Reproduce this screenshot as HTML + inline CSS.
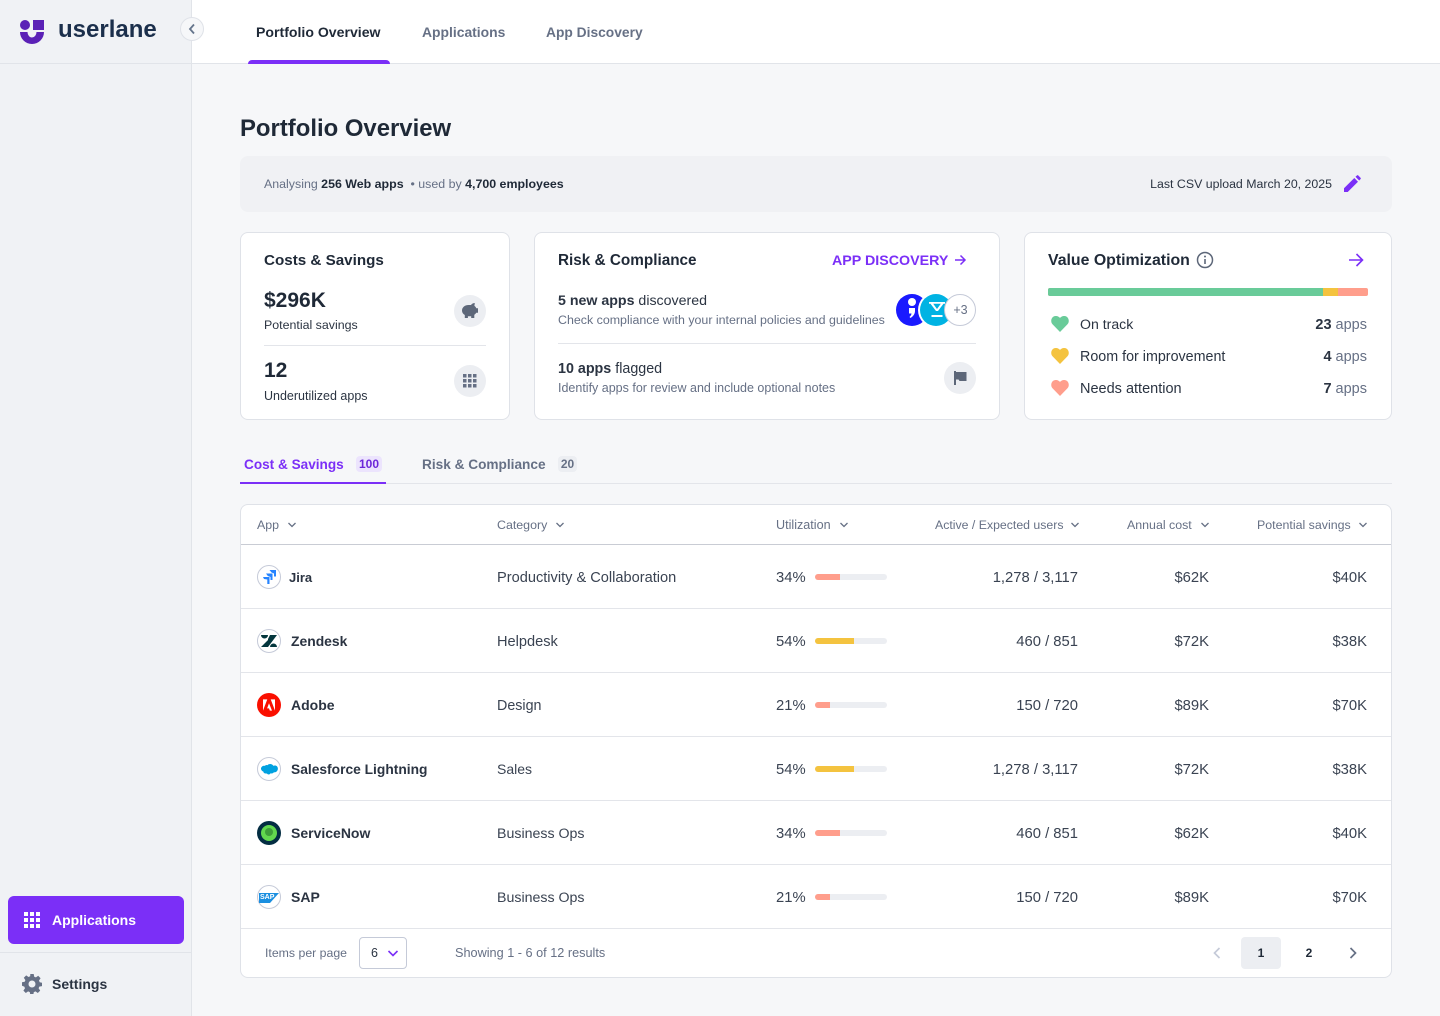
<!DOCTYPE html>
<html lang="en"><head><meta charset="utf-8"><title>Portfolio Overview</title>
<style>
html,body{margin:0;padding:0}
body{width:1440px;height:1016px;position:relative;overflow:hidden;background:#f6f7f9;font-family:"Liberation Sans",sans-serif;color:#1f2937}
div,span,svg{position:absolute}
b,i{position:static;font-style:normal}
.t{white-space:nowrap;line-height:20px;height:20px}
.r{text-align:right}
.g{color:#667085}.d{color:#2b3442}
b{font-weight:700}
.card{background:#fff;border:1px solid #dfe2e8;border-radius:8px;box-sizing:border-box}
.hr{height:1px;background:#e3e5ea}
.h{font-weight:700;color:#1f2937}
.circ{width:32px;height:32px;border-radius:50%;background:#eceef2}
.logo{width:24px;height:24px;border-radius:50%;box-sizing:border-box;border:1px solid #c5cad8;background:#fff;left:257px}
.bar{left:815px;width:72px;height:6px;border-radius:3px;background:#eceef2;overflow:hidden}
.bar span{left:0;top:0;height:6px}
.th{font-size:12.400px;color:#667085;top:515px}
.nm{font-size:14px;font-weight:700;color:#2b3442}
.v{font-size:14.600px;color:#3a4352;margin-top:1px}
.n{font-size:14.800px;color:#3a4352;margin-top:1px}
</style></head><body>

<!-- sidebar -->
<div style="left:0;top:0;width:192px;height:1016px;background:#f0f2f5;border-right:1px solid #e1e4e9;box-sizing:border-box"></div>
<div style="left:0;top:63px;width:1440px;height:1px;background:#e1e4e9"></div>
<div style="left:192px;top:0;width:1248px;height:63px;background:#fff"></div>

<svg style="left:20px;top:20px" width="24" height="24" viewBox="0 0 24 24"><circle cx="5" cy="5" r="5" fill="#5b21b6"/><rect x="13" y="0" width="11" height="10" fill="#5b21b6"/><path d="M0 12h7.500a4.500 5.500 0 0 0 9 0H24a12 12 0 0 1-24 0z" fill="#5b21b6"/></svg>
<span class="t" style="left:58px;top:18px;font-size:24px;line-height:24px;height:24px;font-weight:700;color:#1b2f4b">userlane</span>
<div style="left:180px;top:17px;width:24px;height:24px;border-radius:50%;background:#f6f7f9;border:1px solid #dfe2e8;box-sizing:border-box"></div>
<svg style="left:187px;top:23px" width="10" height="12" viewBox="0 0 10 12"><path d="M7 1.500 3 6l4 4.500" fill="none" stroke="#64748b" stroke-width="1.800"/></svg>

<!-- top nav -->
<span class="t" style="left:256px;top:22px;font-size:14.100px;font-weight:700;color:#1f2937">Portfolio Overview</span>
<span class="t g" style="left:422px;top:22px;font-size:13.900px;font-weight:700">Applications</span>
<span class="t g" style="left:546px;top:23px;font-size:13.800px;font-weight:700">App Discovery</span>
<div style="left:248px;top:60px;width:142px;height:4px;background:#7b2ff7;border-radius:4px 4px 0 0"></div>

<span class="t" style="left:240px;top:114px;height:30px;line-height:30px;font-size:23.900px;font-weight:700;color:#1f2937">Portfolio Overview</span>

<!-- banner -->
<div style="left:240px;top:156px;width:1152px;height:56px;background:#f0f1f4;border-radius:8px"></div>
<span class="t g" style="left:264px;top:174px;font-size:12.400px">Analysing <b style="color:#1f2937">256 Web apps</b> &nbsp;• used by <b style="color:#1f2937">4,700 employees</b></span>
<span class="t r d" style="right:108px;top:174px;font-size:12.350px">Last CSV upload March 20, 2025</span>
<svg style="left:1343px;top:175px" width="18" height="18" viewBox="0 0 18 18"><path d="M1 17v-3.700L11.300 3l3.700 3.700L4.700 17zM12.500 1.800l1.400-1.300a1 1 0 0 1 1.400 0l2.200 2.200a1 1 0 0 1 0 1.400l-1.300 1.400z" fill="#7b2ff7"/></svg>

<!-- card 1 -->
<div class="card" style="left:240px;top:232px;width:270px;height:188px"></div>
<span class="t h" style="left:264px;top:251px;font-size:15.200px">Costs &amp; Savings</span>
<span class="t" style="left:264px;top:291px;font-size:21px;font-weight:700;color:#1f2937">$296K</span>
<span class="t d" style="left:264px;top:315px;font-size:12.400px">Potential savings</span>
<div class="circ" style="left:454px;top:295px"></div>
<svg style="left:461px;top:302px" width="18" height="17" viewBox="0 0 18 17"><path d="M1 8.500C1 5.300 4 3 7.500 3H10c.9-1.200 2.300-2 3.800-2l-.4 2.900c.9.600 1.500 1.300 1.900 2.300H17v4.600h-1.800c-.4.800-1.100 1.500-1.900 2V16h-3.100v-1.700H6.900V16H3.800v-3C2 12 1 10.400 1 8.500z" fill="#5d6779"/></svg>
<div class="hr" style="left:264px;top:345px;width:222px"></div>
<span class="t" style="left:264px;top:361px;font-size:21px;font-weight:700;color:#1f2937">12</span>
<span class="t d" style="left:264px;top:386px;font-size:12.500px">Underutilized apps</span>
<div class="circ" style="left:454px;top:365px"></div>
<svg style="left:463px;top:374px" width="14" height="14" viewBox="0 0 14 14" fill="#667085"><rect width="3.500" height="3.500"/><rect x="5" width="3.500" height="3.500"/><rect x="10" width="3.500" height="3.500"/><rect y="5" width="3.500" height="3.500"/><rect x="5" y="5" width="3.500" height="3.500"/><rect x="10" y="5" width="3.500" height="3.500"/><rect y="10" width="3.500" height="3.500"/><rect x="5" y="10" width="3.500" height="3.500"/><rect x="10" y="10" width="3.500" height="3.500"/></svg>

<!-- card 2 -->
<div class="card" style="left:534px;top:232px;width:466px;height:188px"></div>
<span class="t h" style="left:558px;top:251px;font-size:15.300px">Risk &amp; Compliance</span>
<span class="t" style="left:832px;top:251px;font-size:14.250px;font-weight:700;color:#7b2ff7">APP DISCOVERY</span>
<svg style="left:953px;top:253px" width="14" height="14" viewBox="0 0 14 14"><path d="M2 7h10M7.500 2.500 12 7l-4.500 4.500" fill="none" stroke="#7b2ff7" stroke-width="1.500"/></svg>
<span class="t d" style="left:558px;top:291px;font-size:14.200px"><b>5 new apps</b> discovered</span>
<span class="t g" style="left:558px;top:310px;font-size:12.420px">Check compliance with your internal policies and guidelines</span>
<div style="left:896px;top:294px;width:32px;height:32px;border-radius:50%;background:#1a1aff"></div>
<div style="left:908px;top:298px;width:8px;height:8px;border-radius:50%;background:#fff"></div>
<svg style="left:908px;top:308px" width="7" height="10" viewBox="0 0 7 10"><path d="M1 0h6v3c0 3-2 5.500-4.500 7L1.500 9C3 7.500 3.400 6.500 3.500 5.500H1z" fill="#fff"/></svg>
<div style="left:918px;top:292px;width:36px;height:36px;border-radius:50%;background:#fff"></div>
<div style="left:920px;top:294px;width:32px;height:32px;border-radius:50%;background:#00b3e3"></div>
<svg style="left:929px;top:302px" width="16" height="16" viewBox="0 0 16 16"><path d="M0 0h16v1.800h-1.500L9 9H7L1.500 1.800H0zM4.200 1.800 8 7l3.800-5.200zM2.500 13h11v2h-11z" fill="#fff"/></svg>
<div style="left:944px;top:294px;width:32px;height:32px;border-radius:50%;background:#fff;border:1px solid #c5cad8;box-sizing:border-box"></div>
<span class="t g" style="left:944px;top:300px;width:33px;text-align:center;font-size:12.500px">+3</span>
<div class="hr" style="left:558px;top:343px;width:418px"></div>
<span class="t d" style="left:558px;top:359px;font-size:14.300px"><b>10 apps</b> flagged</span>
<span class="t g" style="left:558px;top:378px;font-size:12.500px">Identify apps for review and include optional notes</span>
<div class="circ" style="left:944px;top:362px"></div>
<svg style="left:953px;top:371px" width="14" height="14" viewBox="0 0 14 14"><path d="M1 0h2v1h10.500v9H6.500l-1-1.500H3V14H1z" fill="#5d6779"/></svg>

<!-- card 3 -->
<div class="card" style="left:1024px;top:232px;width:368px;height:188px"></div>
<span class="t h" style="left:1048px;top:251px;font-size:15.870px">Value Optimization</span>
<svg style="left:1196px;top:251px" width="18" height="18" viewBox="0 0 18 18"><circle cx="9" cy="9" r="7.500" fill="none" stroke="#5d6779" stroke-width="1.500"/><path d="M9 8v5" stroke="#5d6779" stroke-width="1.600"/><circle cx="9" cy="5.500" r="1" fill="#5d6779"/></svg>
<svg style="left:1347px;top:251px" width="18" height="18" viewBox="0 0 18 18"><path d="M2 9h13M9.500 3l6 6-6 6" fill="none" stroke="#7b2ff7" stroke-width="1.600"/></svg>
<div style="left:1048px;top:288px;width:320px;height:8px;border-radius:2px;overflow:hidden;background:#ff9e8c">
 <span style="left:0;top:0;width:275px;height:8px;background:#69cb99"></span>
 <span style="left:275px;top:0;width:15px;height:8px;background:#f4c33f"></span>
</div>
<svg style="left:1051px;top:316px" width="18" height="16" viewBox="0 0 18 16"><path d="M9 16 1.500 8.300C-1 5.500.3.300 4.500 0 6.300-.1 7.900.6 9 2c1.100-1.400 2.700-2.100 4.500-2 4.200.3 5.500 5.500 3 8.300z" fill="#69cb99"/></svg>
<span class="t d" style="left:1080px;top:314px;font-size:14.100px">On track</span>
<span class="t r g" style="right:73px;top:315px;font-size:14.500px"><b style="color:#2b3442">23</b> apps</span>
<svg style="left:1051px;top:348px" width="18" height="16" viewBox="0 0 18 16"><path d="M9 16 1.500 8.300C-1 5.500.3.300 4.500 0 6.300-.1 7.900.6 9 2c1.100-1.400 2.700-2.100 4.500-2 4.200.3 5.500 5.500 3 8.300z" fill="#f4c33f"/></svg>
<span class="t d" style="left:1080px;top:347px;font-size:14.300px">Room for improvement</span>
<span class="t r g" style="right:73px;top:347px;font-size:14.500px"><b style="color:#2b3442">4</b> apps</span>
<svg style="left:1051px;top:380px" width="18" height="16" viewBox="0 0 18 16"><path d="M9 16 1.500 8.300C-1 5.500.3.300 4.500 0 6.300-.1 7.900.6 9 2c1.100-1.400 2.700-2.100 4.500-2 4.200.3 5.500 5.500 3 8.300z" fill="#ff9e8c"/></svg>
<span class="t d" style="left:1080px;top:379px;font-size:14.500px">Needs attention</span>
<span class="t r g" style="right:73px;top:379px;font-size:14.500px"><b style="color:#2b3442">7</b> apps</span>

<!-- tabs -->
<div style="left:240px;top:483px;width:1152px;height:1px;background:#e3e5ea"></div>
<div style="left:240px;top:482px;width:146px;height:2px;background:#7b2ff7"></div>
<span class="t" style="left:244px;top:455px;font-size:13.600px;font-weight:700;color:#7b2ff7">Cost &amp; Savings</span>
<div style="left:356px;top:456px;width:26px;height:16px;background:#ece4fd;border-radius:4px"></div>
<span class="t" style="left:356px;top:454px;width:26px;text-align:center;font-size:12px;font-weight:700;color:#6d28d9">100</span>
<span class="t g" style="left:422px;top:455px;font-size:13.650px;font-weight:700">Risk &amp; Compliance</span>
<div style="left:558px;top:456px;width:19px;height:16px;background:#eceef2;border-radius:4px"></div>
<span class="t g" style="left:558px;top:454px;width:19px;text-align:center;font-size:12px;font-weight:700">20</span>

<!-- table -->
<div class="card" style="left:240px;top:504px;width:1152px;height:474px"></div>
<div style="left:241px;top:544px;width:1150px;height:1px;background:#c9ccd4"></div>
<div class="hr" style="left:241px;top:608px;width:1150px"></div>
<div class="hr" style="left:241px;top:672px;width:1150px"></div>
<div class="hr" style="left:241px;top:736px;width:1150px"></div>
<div class="hr" style="left:241px;top:800px;width:1150px"></div>
<div class="hr" style="left:241px;top:864px;width:1150px"></div>
<div class="hr" style="left:241px;top:928px;width:1150px"></div>

<span class="t th" style="left:257px">App</span>
<svg style="left:287px;top:521px" width="10" height="8" viewBox="0 0 10 8"><path d="M1.500 2 5 5.500 8.500 2" fill="none" stroke="#667085" stroke-width="1.300"/></svg>
<span class="t th" style="left:497px">Category</span>
<svg style="left:555px;top:521px" width="10" height="8" viewBox="0 0 10 8"><path d="M1.500 2 5 5.500 8.500 2" fill="none" stroke="#667085" stroke-width="1.300"/></svg>
<span class="t th" style="left:776px;font-size:12.600px">Utilization</span>
<svg style="left:839px;top:521px" width="10" height="8" viewBox="0 0 10 8"><path d="M1.500 2 5 5.500 8.500 2" fill="none" stroke="#667085" stroke-width="1.300"/></svg>
<span class="t th" style="left:935px;font-size:12.300px">Active / Expected users</span>
<svg style="left:1070px;top:521px" width="10" height="8" viewBox="0 0 10 8"><path d="M1.500 2 5 5.500 8.500 2" fill="none" stroke="#667085" stroke-width="1.300"/></svg>
<span class="t th" style="left:1127px">Annual cost</span>
<svg style="left:1200px;top:521px" width="10" height="8" viewBox="0 0 10 8"><path d="M1.500 2 5 5.500 8.500 2" fill="none" stroke="#667085" stroke-width="1.300"/></svg>
<span class="t th" style="left:1257px">Potential savings</span>
<svg style="left:1358px;top:521px" width="10" height="8" viewBox="0 0 10 8"><path d="M1.500 2 5 5.500 8.500 2" fill="none" stroke="#667085" stroke-width="1.300"/></svg>

<!-- row 1 -->
<div class="logo" style="top:565px"></div>
<svg style="left:262px;top:570px" width="14" height="14" viewBox="0 0 14 14"><path d="M7.500 0H14v6.500h-2V3.500L9.500 2.500zM4 3.500h6.500V10h-2V7L5.800 6zM1 7h6.500v7h-2.200V9.500L2 9z" fill="#2684ff"/></svg>
<span class="t nm" style="left:289px;top:568px;font-size:13px">Jira</span>
<span class="t v" style="left:497px;top:567px">Productivity &amp; Collaboration</span>
<span class="t n" style="left:776px;top:567px">34%</span>
<div class="bar" style="top:574px"><span style="width:25px;background:#ff9e8c"></span></div>
<span class="t n r" style="right:362px;top:567px">1,278 / 3,117</span>
<span class="t n r" style="right:231px;top:567px">$62K</span>
<span class="t n r" style="right:73px;top:567px">$40K</span>

<!-- row 2 -->
<div class="logo" style="top:629px"></div>
<svg style="left:261px;top:635px" width="16" height="12" viewBox="0 0 16 12"><path d="M0 0h7a3.500 3.500 0 0 1-7 0zM9 0h7L7 12V4zM7 5v7H0zM9 12a3.500 3.500 0 0 1 7 0z" fill="#03363d"/></svg>
<span class="t nm" style="left:291px;top:631px;font-size:13.900px">Zendesk</span>
<span class="t v" style="left:497px;top:631px">Helpdesk</span>
<span class="t n" style="left:776px;top:631px">54%</span>
<div class="bar" style="top:638px"><span style="width:39px;background:#f4c33f"></span></div>
<span class="t n r" style="right:362px;top:631px">460 / 851</span>
<span class="t n r" style="right:231px;top:631px">$72K</span>
<span class="t n r" style="right:73px;top:631px">$38K</span>

<!-- row 3 -->
<div class="logo" style="top:693px;background:#fa0f00;border:0"></div>
<svg style="left:263px;top:699px" width="12" height="12" viewBox="0 0 14 13"><path d="M0 0h5L0 13zM9 0h5v13zM7 4.500 10.500 13H8L7 10.500H4.800z" fill="#fff"/></svg>
<span class="t nm" style="left:291px;top:695px">Adobe</span>
<span class="t v" style="left:497px;top:695px;font-size:14.300px">Design</span>
<span class="t n" style="left:776px;top:695px">21%</span>
<div class="bar" style="top:702px"><span style="width:15px;background:#ff9e8c"></span></div>
<span class="t n r" style="right:362px;top:695px">150 / 720</span>
<span class="t n r" style="right:231px;top:695px">$89K</span>
<span class="t n r" style="right:73px;top:695px">$70K</span>

<!-- row 4 -->
<div class="logo" style="top:757px"></div>
<svg style="left:260px;top:763px" width="18" height="13" viewBox="0 0 18 13"><path d="M7.500 2.200C8.200 1.400 9.200 1 10.200 1c1.300 0 2.500.7 3.100 1.800 3-1.100 5 1 4.500 3.600-.3 1.800-2 3.200-3.900 2.900-.7 1.100-2.200 1.500-3.300 1-.6 1.400-2.800 1.600-3.700.2C5 10.800 3.400 10 3.400 8.600 1.500 8 .5 6.200 1.200 4.600c.7-1.500 2.400-2.200 3.600-1.700.6-.7 1.700-1.300 2.700-.7z" fill="#00a1e0"/></svg>
<span class="t nm" style="left:291px;top:760px;font-size:13.800px">Salesforce Lightning</span>
<span class="t v" style="left:497px;top:759px;font-size:14px;margin-top:0">Sales</span>
<span class="t n" style="left:776px;top:759px">54%</span>
<div class="bar" style="top:766px"><span style="width:39px;background:#f4c33f"></span></div>
<span class="t n r" style="right:362px;top:759px">1,278 / 3,117</span>
<span class="t n r" style="right:231px;top:759px">$72K</span>
<span class="t n r" style="right:73px;top:759px">$38K</span>

<!-- row 5 -->
<div class="logo" style="top:821px;background:#032d42;border:0"></div>
<div style="left:261px;top:825px;width:16px;height:16px;border-radius:50%;background:#62d84e"></div>
<div style="left:265px;top:828px;width:8px;height:8px;border-radius:50%;background:#3f9e3a"></div>
<span class="t nm" style="left:291px;top:823px">ServiceNow</span>
<span class="t v" style="left:497px;top:823px;font-size:14.200px">Business Ops</span>
<span class="t n" style="left:776px;top:823px">34%</span>
<div class="bar" style="top:830px"><span style="width:25px;background:#ff9e8c"></span></div>
<span class="t n r" style="right:362px;top:823px">460 / 851</span>
<span class="t n r" style="right:231px;top:823px">$62K</span>
<span class="t n r" style="right:73px;top:823px">$40K</span>

<!-- row 6 -->
<div class="logo" style="top:885px"></div>
<svg style="left:259px;top:893px" width="20" height="10" viewBox="0 0 20 10"><path d="M0 0h20L11 10H0z" fill="#1b8fe0"/></svg>
<span class="t" style="left:260px;top:892px;height:12px;line-height:12px;font-size:7px;font-weight:700;color:#fff">SAP</span>
<span class="t nm" style="left:291px;top:887px">SAP</span>
<span class="t v" style="left:497px;top:887px;font-size:14.200px">Business Ops</span>
<span class="t n" style="left:776px;top:887px">21%</span>
<div class="bar" style="top:894px"><span style="width:15px;background:#ff9e8c"></span></div>
<span class="t n r" style="right:362px;top:887px">150 / 720</span>
<span class="t n r" style="right:231px;top:887px">$89K</span>
<span class="t n r" style="right:73px;top:887px">$70K</span>

<!-- pagination -->
<span class="t g" style="left:265px;top:943px;font-size:12.300px">Items per page</span>
<div style="left:359px;top:937px;width:48px;height:32px;border:1px solid #c5cad8;border-radius:4px;box-sizing:border-box;background:#fff"></div>
<span class="t d" style="left:371px;top:943px;font-size:12.500px">6</span>
<svg style="left:387px;top:949px" width="12" height="9" viewBox="0 0 12 9"><path d="M1.500 2 6 6.500 10.500 2" fill="none" stroke="#7b2ff7" stroke-width="1.600"/></svg>
<span class="t g" style="left:455px;top:943px;font-size:12.700px">Showing 1 - 6 of 12 results</span>
<svg style="left:1212px;top:947px" width="10" height="12" viewBox="0 0 10 12"><path d="M7.500 1 2.500 6l5 5" fill="none" stroke="#c5cad8" stroke-width="1.700"/></svg>
<div style="left:1241px;top:937px;width:40px;height:32px;background:#eceef2;border-radius:4px"></div>
<span class="t" style="left:1241px;top:943px;width:40px;text-align:center;font-size:12px;font-weight:700;color:#1f2937">1</span>
<span class="t" style="left:1289px;top:943px;width:40px;text-align:center;font-size:12px;font-weight:700;color:#1f2937">2</span>
<svg style="left:1348px;top:947px" width="10" height="12" viewBox="0 0 10 12"><path d="M2.500 1l5 5-5 5" fill="none" stroke="#667085" stroke-width="1.700"/></svg>

<!-- sidebar bottom -->
<div style="left:8px;top:896px;width:176px;height:48px;border-radius:6px;background:#7b2ff7"></div>
<svg style="left:24px;top:912px" width="16" height="16" viewBox="0 0 16 16" fill="#fff"><rect width="4" height="4"/><rect x="6" width="4" height="4"/><rect x="12" width="4" height="4"/><rect y="6" width="4" height="4"/><rect x="6" y="6" width="4" height="4"/><rect x="12" y="6" width="4" height="4"/><rect y="12" width="4" height="4"/><rect x="6" y="12" width="4" height="4"/><rect x="12" y="12" width="4" height="4"/></svg>
<span class="t" style="left:52px;top:910px;font-size:14px;font-weight:700;color:#fff">Applications</span>
<div style="left:0;top:952px;width:191px;height:1px;background:#e1e4e9"></div>
<svg style="left:22px;top:974px" width="20" height="20" viewBox="0 0 20 20"><path fill-rule="evenodd" d="M8.300 0h3.400l.5 2.700 1.700.7 2.300-1.600 2.400 2.400-1.600 2.300.7 1.700 2.300.5v3.400l-2.700.5-.7 1.700 1.600 2.300-2.400 2.400-2.300-1.600-1.700.7-.5 2.700H8.300l-.5-2.700-1.700-.7-2.300 1.600-2.400-2.400 1.600-2.300-.7-1.700L0 11.700V8.300l2.700-.5.700-1.700-1.600-2.300 2.400-2.400 2.300 1.600 1.700-.7zM10 6.500a3.500 3.500 0 1 0 0 7 3.500 3.500 0 0 0 0-7z" fill="#667085"/></svg>
<span class="t" style="left:52px;top:974px;font-size:14px;font-weight:700;color:#2b3442">Settings</span>

</body></html>
